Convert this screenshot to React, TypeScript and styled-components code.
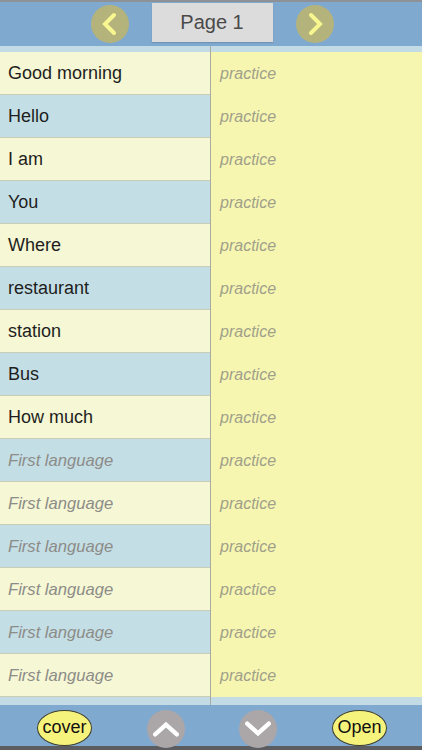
import React from "react";
import styled, { createGlobalStyle } from "styled-components";

const GlobalStyle = createGlobalStyle`
  html, body {
    margin: 0;
    padding: 0;
    background: #c2dbe5;
  }
  body {
    font-family: "Liberation Sans", Arial, sans-serif;
  }
`;

const words = [
  "Good morning",
  "Hello",
  "I am",
  "You",
  "Where",
  "restaurant",
  "station",
  "Bus",
  "How much",
];

const rows = [
  ...words.map((w) => ({ text: w, placeholder: false })),
  ...Array.from({ length: 6 }, () => ({
    text: "First language",
    placeholder: true,
  })),
];

const Chevron = ({ dir, color }: { dir: "left" | "right" | "up" | "down"; color: string }) => {
  const paths = {
    left: "M16 3 L7 12 L16 21",
    right: "M8 3 L17 12 L8 21",
    up: "M2 17 L12 8 L22 17",
    down: "M2 7 L12 16 L22 7",
  };
  return (
    <svg width="24" height="24" viewBox="0 0 24 24">
      <path
        d={paths[dir]}
        fill="none"
        stroke={color}
        strokeWidth={4}
        strokeLinecap="round"
        strokeLinejoin="miter"
      />
    </svg>
  );
};

const App = () => {
  return (
    <Screen>
      <GlobalStyle />
      <TopBar>
        <PageArrow aria-label="previous page">
          <Chevron dir="left" color="#f8f690" />
        </PageArrow>
        <PageLabel>Page 1</PageLabel>
        <PageArrow aria-label="next page">
          <Chevron dir="right" color="#f8f690" />
        </PageArrow>
      </TopBar>

      <List>
        <Column $side="left">
          {rows.map((r, i) => (
            <WordCell key={i} $alt={i % 2 === 1}>
              <WordText $placeholder={r.placeholder}>{r.text}</WordText>
            </WordCell>
          ))}
        </Column>
        <Column $side="right">
          <PracticePane>
            {rows.map((_, i) => (
              <PracticeCell key={i}>practice</PracticeCell>
            ))}
          </PracticePane>
        </Column>
      </List>

      <BottomBar>
        <Pill>cover</Pill>
        <ScrollButton aria-label="scroll up">
          <Chevron dir="up" color="#ffffff" />
        </ScrollButton>
        <ScrollButton aria-label="scroll down">
          <Chevron dir="down" color="#ffffff" />
        </ScrollButton>
        <Pill>Open</Pill>
      </BottomBar>
    </Screen>
  );
};

export default App;

const Screen = styled.div`
  width: 422px;
  height: 750px;
  display: flex;
  flex-direction: column;
  overflow: hidden;
  background: #c2dbe5;
`;

const TopBar = styled.div`
  height: 44px;
  border-top: 2px solid #8e9196;
  background: #80a9d0;
  display: flex;
  align-items: center;
  justify-content: center;
  gap: 23px;
  padding-left: 2px;
`;

const PageArrow = styled.button`
  width: 38px;
  height: 38px;
  border-radius: 50%;
  border: none;
  padding: 0;
  background: #b4b37b;
  display: flex;
  align-items: center;
  justify-content: center;
  svg {
    width: 24px;
    height: 24px;
  }
`;

const PageLabel = styled.div`
  width: 121px;
  height: 39px;
  margin-top: -3px;
  background: #dcdcdc;
  box-shadow: 0 1px 1px rgba(0, 0, 0, 0.12);
  display: flex;
  align-items: center;
  justify-content: center;
  font-size: 20px;
  color: #4a4a4a;
`;

const List = styled.div`
  flex: 1;
  display: grid;
  grid-template-columns: 211px 1fr;
  overflow: hidden;
`;

const Column = styled.div<{ $side: "left" | "right" }>`
  padding-top: 6px;
  display: flex;
  flex-direction: column;
  border-right: ${(p) => (p.$side === "left" ? "1px solid #a9aba0" : "none")};
`;

const WordCell = styled.div<{ $alt: boolean }>`
  height: 42px;
  border-bottom: 1px solid #cbccb6;
  background: ${(p) => (p.$alt ? "#c4dee5" : "#f6f7d4")};
  display: flex;
  align-items: center;
  padding-left: 8px;
  padding-top: 1px;
  box-sizing: border-box;
  height: 43px;
`;

const WordText = styled.span<{ $placeholder: boolean }>`
  font-size: ${(p) => (p.$placeholder ? "16.6px" : "18px")};
  font-style: ${(p) => (p.$placeholder ? "italic" : "normal")};
  color: ${(p) => (p.$placeholder ? "#8c8c88" : "#1e1e1e")};
`;

const PracticePane = styled.div`
  background: #f7f6b1;
  display: flex;
  flex-direction: column;
`;

const PracticeCell = styled.div`
  height: 43px;
  display: flex;
  align-items: center;
  padding-left: 9px;
  padding-top: 1px;
  box-sizing: border-box;
  font-size: 16px;
  font-style: italic;
  color: #a0a08a;
`;

const BottomBar = styled.div`
  height: 41px;
  margin-top: auto;
  background: #80a9d0;
  border-bottom: 4px solid #5b5d60;
  display: flex;
  align-items: center;
  padding: 0 35px 0 37px;
  justify-content: space-between;
`;

const Pill = styled.button`
  width: 55px;
  height: 36px;
  border-radius: 50%;
  border: 1px solid #3e3e30;
  background: #f5f37c;
  padding: 0;
  font-family: "Liberation Sans", Arial, sans-serif;
  font-size: 18px;
  color: #111;
  display: flex;
  align-items: center;
  justify-content: center;
  margin-top: 4px;
`;

const ScrollButton = styled.button`
  width: 38px;
  height: 38px;
  border-radius: 50%;
  border: none;
  padding: 0;
  background: #aba6a7;
  display: flex;
  align-items: center;
  justify-content: center;
  margin-top: 6px;
  svg {
    width: 26px;
    height: 26px;
  }
`;
